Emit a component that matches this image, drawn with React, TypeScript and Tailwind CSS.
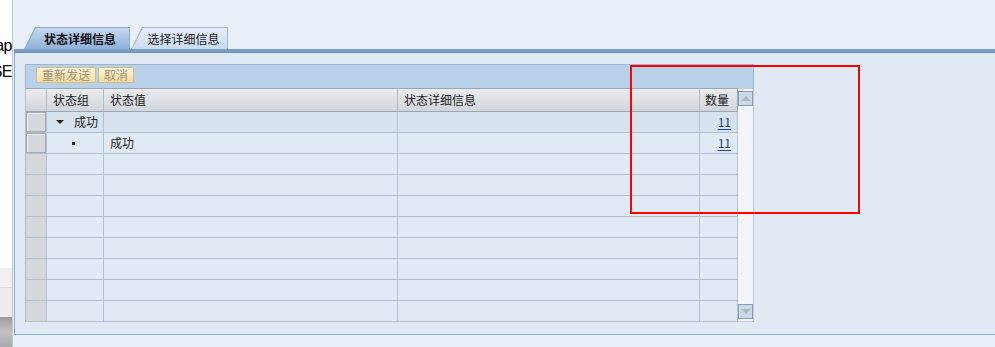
import React from "react";

const rows = Array.from({ length: 10 }, (_, i) => i);

function LeftStrip() {
  return (
    <div className="w-[13px] h-full flex flex-col border-r border-[#c4c4c4] shrink-0">
      <div className="h-[268px] bg-white overflow-hidden pt-[33px]">
        <div className="flex flex-col items-end font-['Liberation_Sans_Narrow','Liberation_Sans',sans-serif] text-[16px] leading-[26px] tracking-[-0.5px] text-black whitespace-nowrap">
          <span>Map</span>
          <span>BSE</span>
        </div>
      </div>
      <div className="h-[20px] bg-[#f0f0f0] border-b border-[#dcdcdc]" />
      <div className="h-[29px] bg-[#ededed]" />
      <div className="flex-1 bg-gradient-to-b from-[#9d9d9d] via-[#c2c2c2] to-[#a8a8a8]" />
    </div>
  );
}

function Tabs() {
  return (
    <div className="h-[22px] flex items-end pl-[10px] gap-[1px]">
      <div className="relative w-[106px] h-[22px] bg-[#8aa9cf] [clip-path:polygon(0_100%,11px_0,100%_0,100%_100%)]">
        <div className="absolute inset-x-[1px] top-[1px] bottom-0 bg-gradient-to-b from-[#c4d7ee] to-[#8fb1da] [clip-path:polygon(0_100%,11px_0,100%_0,100%_100%)] flex items-center justify-center pl-[6px]">
          <span className="font-bold text-[#111] border-b border-white leading-[16px] pb-[2px] px-[3px] mt-[3px]">
            状态详细信息
          </span>
        </div>
      </div>
      <div className="relative w-[97px] h-[22px] bg-[#9fb7d6] [clip-path:polygon(0_100%,11px_0,100%_0,100%_100%)]">
        <div className="absolute inset-x-[1px] top-[1px] bottom-0 bg-gradient-to-b from-[#e6eef8] to-[#cadbef] [clip-path:polygon(0_100%,11px_0,100%_0,100%_100%)] flex items-center justify-center pl-[8px]">
          <span className="text-[#222]">选择详细信息</span>
        </div>
      </div>
    </div>
  );
}

function ToolButton({ label, w }: { label: string; w: string }) {
  return (
    <div
      className={`${w} h-[16px] rounded-[2px] border border-[#d3bd7f] bg-gradient-to-b from-[#fdf6dc] to-[#f1dca2] flex items-center justify-center text-[#a39270] leading-none`}
    >
      {label}
    </div>
  );
}

function Scrollbar() {
  return (
    <div className="w-[16px] border-r border-t border-b border-[#c2ccd6] bg-[#f1f5f9] flex flex-col justify-between py-[1px]">
      <div className="w-[15px] h-[15px] border border-[#8b9cb0] bg-[#c7d9ea] flex items-center justify-center mt-[1px]">
        <div className="w-0 h-0 border-x-[5px] border-x-transparent border-b-[5px] border-b-[#aeb7c0]" />
      </div>
      <div className="w-[15px] h-[15px] border border-[#8b9cb0] bg-[#c7d9ea] flex items-center justify-center mb-[1px]">
        <div className="w-0 h-0 border-x-[5px] border-x-transparent border-t-[5px] border-t-[#aeb7c0]" />
      </div>
    </div>
  );
}

function Table() {
  return (
    <div className="w-[729px] flex flex-col">
      <div className="h-[24px] border-t border-x border-[#9ab5d3] bg-[#b9d1e8] flex items-start pt-[2px] pl-[10px] gap-[2px]">
        <ToolButton label="重新发送" w="w-[60px]" />
        <ToolButton label="取消" w="w-[36px]" />
      </div>
      <div className="flex">
        <div className="w-[713px] border-l border-[#b0bccb] flex flex-col">
          <div className="h-[24px] flex border-y border-[#9aa6b3] bg-gradient-to-b from-[#eaecef] to-[#d1d5d9] text-[#222]">
            <div className="w-[21px] border-r border-[#b4bcc6]" />
            <div className="w-[57px] border-r border-[#b4bcc6] pl-[6px] flex items-center">状态组</div>
            <div className="w-[294px] border-r border-[#b4bcc6] pl-[6px] flex items-center">状态值</div>
            <div className="w-[302px] border-r border-[#b4bcc6] pl-[6px] flex items-center">状态详细信息</div>
            <div className="w-[38px] border-r border-[#9aa6b3] pl-[5px] flex items-center">数量</div>
          </div>
          {rows.map((i) => (
            <div
              key={i}
              className={`h-[21px] flex border-b border-[#b3c1cf] ${i === 0 ? "bg-[#d6e2ed]" : "bg-[#dfeaf4]"}`}
            >
              <div className="w-[21px] border-r border-[#b3c1cf] bg-[#d4d7dc] flex">
                {i < 2 && (
                  <div className="flex-1 m-0 border border-[#a1a9b3] bg-[#d5d8dc] shadow-[inset_1px_1px_0_#eef0f2]" />
                )}
              </div>
              <div className="w-[57px] border-r border-[#b3c1cf] flex items-center text-[#222]">
                {i === 0 && (
                  <>
                    <div className="ml-[9px] w-0 h-0 border-x-[4px] border-x-transparent border-t-[4px] border-t-[#222]" />
                    <span className="ml-[10px]">成功</span>
                  </>
                )}
                {i === 1 && <div className="ml-[25px] w-[3px] h-[3px] bg-[#222]" />}
              </div>
              <div className="w-[294px] border-r border-[#b3c1cf] pl-[6px] flex items-center text-[#222]">
                {i === 1 && "成功"}
              </div>
              <div className="w-[302px] border-r border-[#b3c1cf]" />
              <div className="w-[38px] border-r border-[#b3c1cf] flex items-center justify-end pr-[6px]">
                {i < 2 && <span className="text-[#1d3f8e] underline underline-offset-2">11</span>}
              </div>
            </div>
          ))}
        </div>
        <Scrollbar />
      </div>
    </div>
  );
}

export default function App() {
  return (
    <div className="relative w-[995px] h-[347px] flex overflow-hidden bg-[#e8eff7] font-['Noto_Sans_CJK_SC','Microsoft_YaHei',sans-serif] text-[12px]">
      <LeftStrip />
      <div className="flex-1 flex flex-col pl-[1px]">
        <div className="h-[27px]" />
        <Tabs />
        <div className="h-[4px] bg-[#7a9cc5] border-b border-[#6d8eb9]" />
        <div className="h-[282px] border-l border-b border-[#8fb0d5] bg-[#dfeaf4] pl-[10px] pt-[11px]">
          <Table />
        </div>
      </div>
      <div className="absolute left-[630px] top-[65px] w-[230px] h-[149px] border-2 border-[#ff0000]" />
    </div>
  );
}
